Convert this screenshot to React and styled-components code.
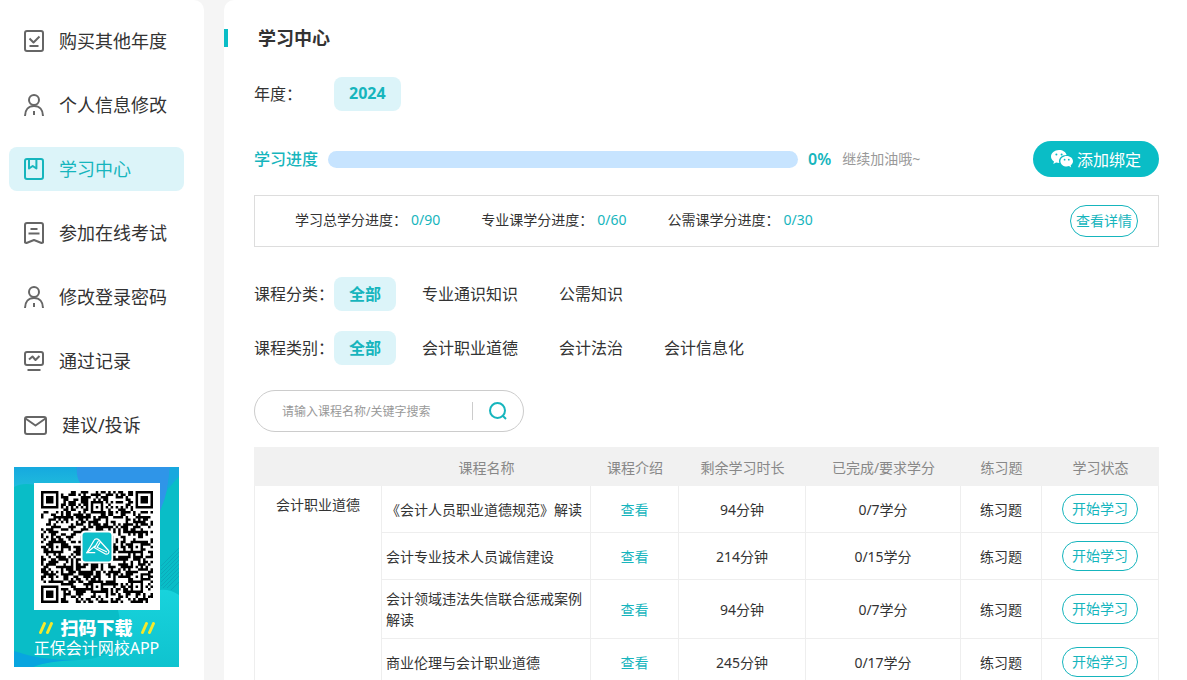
import React, { useState } from 'react'
import styled, { createGlobalStyle } from 'styled-components'

const GlobalStyle = createGlobalStyle`
  * {
    box-sizing: border-box;
  }
  body {
    margin: 0;
    background: #f5f5f5;
    color: #333;
    font-family: "Noto Sans", "Noto Sans CJK SC", sans-serif;
    font-size: 14px;
  }
  button, input {
    font-family: inherit;
  }
  button {
    cursor: pointer;
  }
  a {
    text-decoration: none;
  }
`

const icons = {
  buy: (
    <svg width="20" height="22" viewBox="0 0 20 22">
      <rect x="1" y="1" width="18" height="20" rx="2" />
      <path d="M5.5 8.5l4 4 6-6M5.5 16h9" />
    </svg>
  ),
  user: (
    <svg width="20" height="22" viewBox="0 0 20 22">
      <circle cx="10" cy="6" r="5" />
      <path d="M1 22c0-6 3.5-10 9-10s9 4 9 10M10 17v4" />
    </svg>
  ),
  study: (
    <svg width="20" height="22" viewBox="0 0 20 22">
      <rect x="1" y="1" width="18" height="20" rx="2" />
      <path d="M5 1v9.5l3.7-2.5 3.7 2.5V1" />
    </svg>
  ),
  exam: (
    <svg width="20" height="22" viewBox="0 0 20 22">
      <path d="M3 1h14a2 2 0 0 1 2 2v17.5L17.5 21 10 18l-7.5 3L1 20.5V3a2 2 0 0 1 2-2z" />
      <path d="M6.5 7h7M4.5 11.5h11" />
    </svg>
  ),
  record: (
    <svg width="20" height="22" viewBox="0 0 20 22">
      <rect x="1" y="2" width="18" height="13" rx="2" />
      <path d="M5 9.5l3.5-3 3 3.5L15.5 6M3.5 20h13" />
    </svg>
  ),
  mail: (
    <svg width="23" height="22" viewBox="0 0 23 22">
      <rect x="1" y="3" width="21" height="17" rx="2" />
      <path d="M1.5 4.5l10 7 10-7" />
    </svg>
  ),
}

const menu = [
  { icon: 'buy', text: '购买其他年度' },
  { icon: 'user', text: '个人信息修改' },
  { icon: 'study', text: '学习中心' },
  { icon: 'exam', text: '参加在线考试' },
  { icon: 'user', text: '修改登录密码' },
  { icon: 'record', text: '通过记录' },
  { icon: 'mail', text: '建议/投诉' },
]

const credits = [
  { label: '学习总学分进度：', value: '0/90' },
  { label: '专业课学分进度：', value: '0/60' },
  { label: '公需课学分进度：', value: '0/30' },
]

const columns = [
  { title: '', width: 128 },
  { title: '课程名称', width: 209 },
  { title: '课程介绍', width: 88 },
  { title: '剩余学习时长', width: 127 },
  { title: '已完成/要求学分', width: 155 },
  { title: '练习题', width: 81 },
  { title: '学习状态', width: 117 },
]

const courses = [
  { name: '《会计人员职业道德规范》解读', time: '94分钟', credit: '0/7学分' },
  { name: '会计专业技术人员诚信建设', time: '214分钟', credit: '0/15学分' },
  { name: '会计领域违法失信联合惩戒案例解读', time: '94分钟', credit: '0/7学分' },
  { name: '商业伦理与会计职业道德', time: '245分钟', credit: '0/17学分' },
]

const QR_SIZE = 45

// rings of a finder (r = 3) or alignment (r = 2) mark
const ring = (x, y, cx, cy, r) => {
  const d = Math.max(Math.abs(x - cx), Math.abs(y - cy))
  if (d > r + (r === 3 ? 1 : 0)) return null
  return r === 3 ? d !== 2 && d !== 4 : d !== 1
}

const qrPath = () => {
  const marks = [
    [3, 3, 3], [41, 3, 3], [3, 41, 3],
    [22, 6, 2], [6, 22, 2], [38, 22, 2], [22, 38, 2], [38, 38, 2],
  ]
  let seed = 20247
  let d = ''
  for (let y = 0; y < QR_SIZE; y++) {
    for (let x = 0; x < QR_SIZE; x++) {
      seed = (seed * 1103515245 + 12345) % 2147483648
      let dark = seed / 2147483648 > 0.49
      if (x === 6 || y === 6) dark = (x + y) % 2 === 0
      for (const [cx, cy, r] of marks) {
        const hit = ring(x, y, cx, cy, r)
        if (hit !== null) dark = hit
      }
      if (dark) d += `M${x} ${y}h1v1h-1z`
    }
  }
  return d
}

function QrCode() {
  return (
    <QrBox>
      <svg width="112" height="112" viewBox="0 0 45 45" role="img" aria-label="二维码">
        <path d={qrPath()} fill="#000" />
        <rect x="16" y="16" width="13" height="13" rx="1.6" fill="#fff" />
        <rect x="16.7" y="16.7" width="11.6" height="11.6" rx="1.2" fill="#0dbfca" />
        <g fill="none" stroke="#fff" strokeWidth=".5" strokeLinejoin="round" strokeLinecap="round">
          <path d="M21.6 24.8h-3.2l3-5.1c.3-.6 1.300-.7 1.800-.1l3.9 4.300c.6.8-.2 1.800-1.200 1.400L21.500 22.800l1.500-2.600" />
          <path d="M18.400 24.800l3.200-2.600M22.500 22.600l1.300-2M22.500 22.600l3.800 1.800" />
        </g>
      </svg>
    </QrBox>
  )
}

function AppCard() {
  return (
    <Card>
      <CardArt viewBox="0 0 165 200" preserveAspectRatio="none">
        <defs>
          <linearGradient id="sky" x1="0" y1="0" x2="0" y2="1">
            <stop offset="0" stopColor="#16a9df" />
            <stop offset="1" stopColor="#1fbbdc" />
          </linearGradient>
          <linearGradient id="wave" x1="0" y1="0" x2="0" y2="1">
            <stop offset="0" stopColor="#18d3dc" />
            <stop offset="1" stopColor="#0fc3cf" />
          </linearGradient>
        </defs>
        <rect width="165" height="200" fill="#09bdc7" />
        <path d="M0 0h70v18H22Q8 15 0 20z" fill="url(#sky)" />
        <path d="M63 0h93q-1 24-10 44V16H66Q62 9 63 0z" fill="#2f95e8" />
        <path d="M156 0h9v9l-12 14z" fill="#17a8de" />
        <g stroke="#0aaabb" strokeWidth="1">
          <path d="M147 99l18-18M147 103l18-18M147 107l18-18M147 111l18-18M147 115l18-18M147 119l18-18M149 121l16-16M153 121l12-12M157 123l8-8" />
        </g>
        <path d="M104 143h42v-20q10-1 19 5v72H20q14-7 45-7 40-2 42-28 0-9-3-22z" fill="url(#wave)" />
        <path d="M0 184q28 10 65 9-32 1-46 7H0z" fill="#08a5df" />
      </CardArt>
      <QrCode />
      <CardTitle>
        <Slashes />
        扫码下载
        <Slashes />
      </CardTitle>
      <CardText>正保会计网校APP</CardText>
    </Card>
  )
}

function Slashes() {
  return (
    <svg width="16" height="12" viewBox="0 0 16 12" stroke="#f4e92c" strokeWidth="3" strokeLinecap="round">
      <path d="M2.5 10.5l4-9M9.5 10.5l4-9" />
    </svg>
  )
}

function WechatIcon() {
  return (
    <svg width="22" height="18" viewBox="0 0 22 18">
      <path d="M8 0C3.5 0 0 3 0 6.5c0 2 1.1 3.8 3 5L2.3 14l2.8-1.5c1 .3 2 .5 3.200.5C7 8.500 10.500 5 15.600 5 14.900 2 11.800 0 8 0z" fill="#fff" />
      <path d="M22 11.200C22 8.300 19.200 6 15.700 6s-6.300 2.300-6.300 5.200 2.800 5.300 6.300 5.300c.8 0 1.600-.1 2.300-.4l2.200 1.300-.6-2c1.500-1 2.400-2.500 2.400-4.200z" fill="#fff" />
      <g fill="#0abdc6">
        <circle cx="5.4" cy="4.5" r="1" />
        <circle cx="10.6" cy="4.5" r="1" />
        <circle cx="13.6" cy="9.7" r=".9" />
        <circle cx="17.8" cy="9.7" r=".9" />
      </g>
    </svg>
  )
}

function Filter({ label, options }) {
  const [active, setActive] = useState(options[0])
  return (
    <FilterRow role="group" aria-label={label}>
      <FilterLabel>{label}：</FilterLabel>
      <Options>
        {options.map((item) => (
          <Pill key={item} type="button" $active={item === active} onClick={() => setActive(item)}>
            {item}
          </Pill>
        ))}
      </Options>
    </FilterRow>
  )
}

function App() {
  const [current, setCurrent] = useState('学习中心')
  const [keyword, setKeyword] = useState('')
  const progress = 0

  return (
    <Page>
      <GlobalStyle />
      <Sidebar>
        <Menu>
          {menu.map((item) => (
            <MenuLink
              key={item.text}
              href="#"
              $active={item.text === current}
              onClick={() => setCurrent(item.text)}
            >
              {icons[item.icon]}
              <span>{item.text}</span>
            </MenuLink>
          ))}
        </Menu>
        <AppCard />
      </Sidebar>
      <Main>
        <Title>学习中心</Title>
        <Content>
          <Filter label="年度" options={['2024']} />
          <ProgressRow>
            <ProgressLabel>学习进度</ProgressLabel>
            <Track>
              <Bar style={{ width: `${progress}%` }} />
            </Track>
            <Percent>{progress}%</Percent>
            <Cheer>继续加油哦~</Cheer>
            <BindButton type="button">
              <WechatIcon />
              添加绑定
            </BindButton>
          </ProgressRow>
          <CreditBox>
            {credits.map((item) => (
              <Credit key={item.label}>
                {item.label}
                <b>{item.value}</b>
              </Credit>
            ))}
            <DetailButton type="button">查看详情</DetailButton>
          </CreditBox>
          <Filters>
            <Filter label="课程分类" options={['全部', '专业通识知识', '公需知识']} />
            <Filter label="课程类别" options={['全部', '会计职业道德', '会计法治', '会计信息化']} />
          </Filters>
          <Search onSubmit={(e) => e.preventDefault()}>
            <SearchInput
              type="text"
              aria-label="搜索课程"
              placeholder="请输入课程名称/关键字搜索"
              value={keyword}
              onChange={(e) => setKeyword(e.target.value)}
            />
            <SearchButton type="submit" aria-label="搜索">
              <svg width="18" height="18" viewBox="0 0 18 18" fill="none" stroke="#16b5bd" strokeWidth="2">
                <circle cx="8.5" cy="8.5" r="7.5" />
                <path d="M13.5 13.5l3.5 3.5" />
              </svg>
            </SearchButton>
          </Search>
          <Table>
            <colgroup>
              {columns.map((col) => (
                <Col key={col.title} $width={col.width} />
              ))}
            </colgroup>
            <thead>
              <tr>
                {columns.map((col) => (
                  <Th key={col.title}>{col.title}</Th>
                ))}
              </tr>
            </thead>
            <tbody>
              {courses.map((course, index) => (
                <tr key={course.name}>
                  {index === 0 && <GroupCell rowSpan={courses.length}>会计职业道德</GroupCell>}
                  <NameCell>{course.name}</NameCell>
                  <Td><ViewLink href="#">查看</ViewLink></Td>
                  <Td>{course.time}</Td>
                  <Td>{course.credit}</Td>
                  <Td>练习题</Td>
                  <Td><StartButton type="button">开始学习</StartButton></Td>
                </tr>
              ))}
            </tbody>
          </Table>
        </Content>
      </Main>
    </Page>
  )
}

const Page = styled.div`
  display: flex;
  gap: 20px;
  min-height: 100vh;
`
const Sidebar = styled.aside`
  flex: none;
  width: 204px;
  padding: 19px 20px 13px 9px;
  background: #fff;
  border-radius: 0 10px 0 0;
`
const Menu = styled.nav`
  display: flex;
  flex-direction: column;
  gap: 20px;
`
const MenuLink = styled.a`
  display: flex;
  align-items: center;
  gap: 15px;
  height: 44px;
  padding-left: 15px;
  border-radius: 8px;
  font-size: 18px;
  color: ${(props) => (props.$active ? '#16b5bd' : '#333')};
  background: ${(props) => (props.$active ? '#dcf4f9' : 'transparent')};
  span {
    padding-bottom: 2px;
  }
  svg {
    flex: none;
    fill: none;
    stroke: ${(props) => (props.$active ? '#16b5bd' : '#666')};
    stroke-width: 2;
    stroke-linejoin: round;
  }
`
const Card = styled.div`
  position: relative;
  display: flex;
  flex-direction: column;
  align-items: center;
  width: 165px;
  height: 200px;
  margin: 20px 0 0 5px;
  padding-top: 16px;
  color: #fff;
  overflow: hidden;
`
const CardArt = styled.svg`
  position: absolute;
  inset: 0;
  width: 100%;
  height: 100%;
`
const QrBox = styled.div`
  position: relative;
  display: flex;
  align-items: center;
  justify-content: center;
  width: 126px;
  height: 127px;
  background: #fff;
`
const CardTitle = styled.div`
  position: relative;
  display: flex;
  align-items: center;
  gap: 7px;
  margin-top: 7px;
  font-size: 18px;
  font-weight: 900;
  line-height: 22px;
`
const CardText = styled.div`
  position: relative;
  font-size: 16px;
  line-height: 18px;
  white-space: nowrap;
`
const Main = styled.main`
  flex: 1;
  min-width: 0;
  padding-top: 29px;
  background: #fff;
  border-radius: 10px 0 0 0;
`
const Title = styled.h1`
  margin: 0 0 30px;
  padding-left: 30px;
  border-left: 4px solid #0abdc6;
  font-size: 18px;
  line-height: 18px;
`
const Content = styled.div`
  padding: 0 28px 0 30px;
`
const FilterRow = styled.div`
  display: flex;
  align-items: center;
  font-size: 16px;
`
const FilterLabel = styled.span`
  flex: none;
  width: 80px;
  padding-bottom: 2px;
  white-space: nowrap;
`
const Options = styled.div`
  display: flex;
  gap: 11px;
`
const Pill = styled.button`
  height: 34px;
  padding: 0 15px 2px;
  border: 0;
  border-radius: 8px;
  font-size: 16px;
  font-weight: ${(props) => (props.$active ? 700 : 400)};
  color: ${(props) => (props.$active ? '#16b5bd' : '#333')};
  background: ${(props) => (props.$active ? '#dcf4f9' : 'transparent')};
`
const ProgressRow = styled.div`
  display: flex;
  align-items: center;
  margin: 30px 0 18px;
`
const ProgressLabel = styled.span`
  padding-bottom: 2px;
  font-size: 16px;
  font-weight: 500;
  color: #16b5bd;
`
const Track = styled.div`
  width: 470px;
  height: 17px;
  margin: 0 10px;
  border-radius: 9px;
  background: #c7e4ff;
  overflow: hidden;
`
const Bar = styled.div`
  height: 100%;
  background: #0abdc6;
`
const Percent = styled.span`
  font-size: 16px;
  font-weight: 600;
  color: #16b5bd;
`
const Cheer = styled.span`
  margin-left: 11px;
  padding-bottom: 2px;
  color: #999;
`
const BindButton = styled.button`
  display: flex;
  align-items: center;
  justify-content: center;
  gap: 4px;
  width: 126px;
  height: 36px;
  margin-left: auto;
  border: 0;
  border-radius: 18px;
  background: #0abdc6;
  color: #fff;
  font-size: 16px;
`
const CreditBox = styled.div`
  display: flex;
  align-items: center;
  gap: 41px;
  height: 52px;
  padding: 0 20px 0 40px;
  border: 1px solid #ddd;
`
const Credit = styled.span`
  padding-bottom: 4px;
  b {
    margin-left: 4px;
    font-weight: 400;
    color: #16b5bd;
  }
`
const OutlineButton = styled.button`
  padding: 0 0 2px;
  border: 1px solid #16b5bd;
  border-radius: 16px;
  background: #fff;
  color: #16b5bd;
  font-size: 14px;
`
const DetailButton = styled(OutlineButton)`
  width: 68px;
  height: 32px;
  margin-left: auto;
`
const StartButton = styled(OutlineButton)`
  display: block;
  width: 76px;
  height: 30px;
  margin: 0 auto;
`
const Filters = styled.div`
  display: flex;
  flex-direction: column;
  gap: 20px;
  margin: 30px 0 25px;
`
const Search = styled.form`
  display: flex;
  align-items: center;
  width: 270px;
  height: 42px;
  margin-bottom: 15px;
  padding-left: 27px;
  border: 1px solid #ccc;
  border-radius: 21px;
`
const SearchInput = styled.input`
  flex: 1;
  min-width: 0;
  height: 18px;
  padding: 0;
  border: 0;
  border-right: 1px solid #ccc;
  outline: none;
  background: none;
  color: #333;
  font-size: 12px;
  &::placeholder {
    color: #999;
  }
`
const SearchButton = styled.button`
  display: flex;
  align-items: center;
  justify-content: center;
  width: 50px;
  height: 40px;
  padding: 0;
  border: 0;
  background: none;
`
const Table = styled.table`
  width: 100%;
  table-layout: fixed;
  border-collapse: separate;
  border-spacing: 0;
`
const Col = styled.col`
  width: ${(props) => props.$width}px;
`
const Th = styled.th`
  height: 39px;
  padding: 0;
  background: #f1f1f1;
  color: #888;
  font-weight: 400;
`
const Td = styled.td`
  padding: 8px 4px;
  border-right: 1px solid #eee;
  border-bottom: 1px solid #eee;
  line-height: 21px;
  text-align: center;
`
const GroupCell = styled(Td)`
  border-left: 1px solid #eee;
  vertical-align: top;
`
const NameCell = styled(Td)`
  text-align: left;
`
const ViewLink = styled.a`
  color: #16b5bd;
`

export default App
